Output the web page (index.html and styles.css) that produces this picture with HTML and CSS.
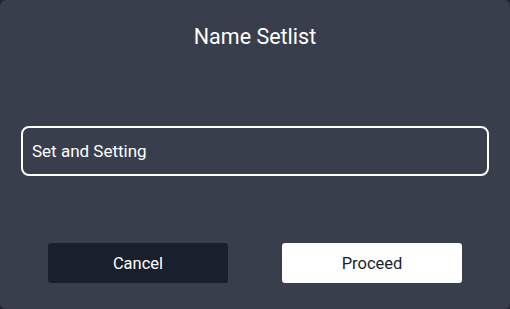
FILE: index.html
```html
<!DOCTYPE html>
<html>
<head>
<meta charset="utf-8">
<link rel="stylesheet" href="styles.css">
</head>
<body>
<div class="dialog">
  <h1 class="title">Name Setlist</h1>
  <div class="field"><span class="field-text">Set and Setting</span></div>
  <div class="actions">
    <button class="btn btn-cancel">Cancel</button>
    <button class="btn btn-proceed">Proceed</button>
  </div>
</div>
</body>
</html>
```
FILE: styles.css
```css
* { box-sizing: border-box; }
html, body {
  margin: 0;
  padding: 0;
  background: #22252f;
  font-family: Roboto, "Noto Sans", sans-serif;
}
.dialog {
  width: 510px;
  height: 309px;
  background: #393e4c;
  border-radius: 6px;
  padding: 24px 21px 26px;
  display: flex;
  flex-direction: column;
}
.title {
  margin: 0;
  font-size: 21.5px;
  font-weight: 400;
  line-height: 26px;
  color: #ffffff;
  text-align: center;
}
.field {
  margin-top: 76px;
  height: 50px;
  border: 2px solid #ffffff;
  border-radius: 8px;
  display: flex;
  align-items: center;
  padding: 0 9px;
}
.field-text {
  color: #ffffff;
  font-size: 17px;
  line-height: 20px;
}
.actions {
  margin-top: 67px;
  padding: 0 27px;
  display: flex;
  justify-content: space-between;
}
.btn {
  width: 180px;
  height: 40px;
  border: none;
  border-radius: 3px;
  font-family: Roboto, "Noto Sans", sans-serif;
  font-size: 16.5px;
  padding: 0;
}
.btn-cancel {
  background: #1a1f2e;
  color: #ffffff;
}
.btn-proceed {
  background: #ffffff;
  color: #1a1f2e;
}
```
